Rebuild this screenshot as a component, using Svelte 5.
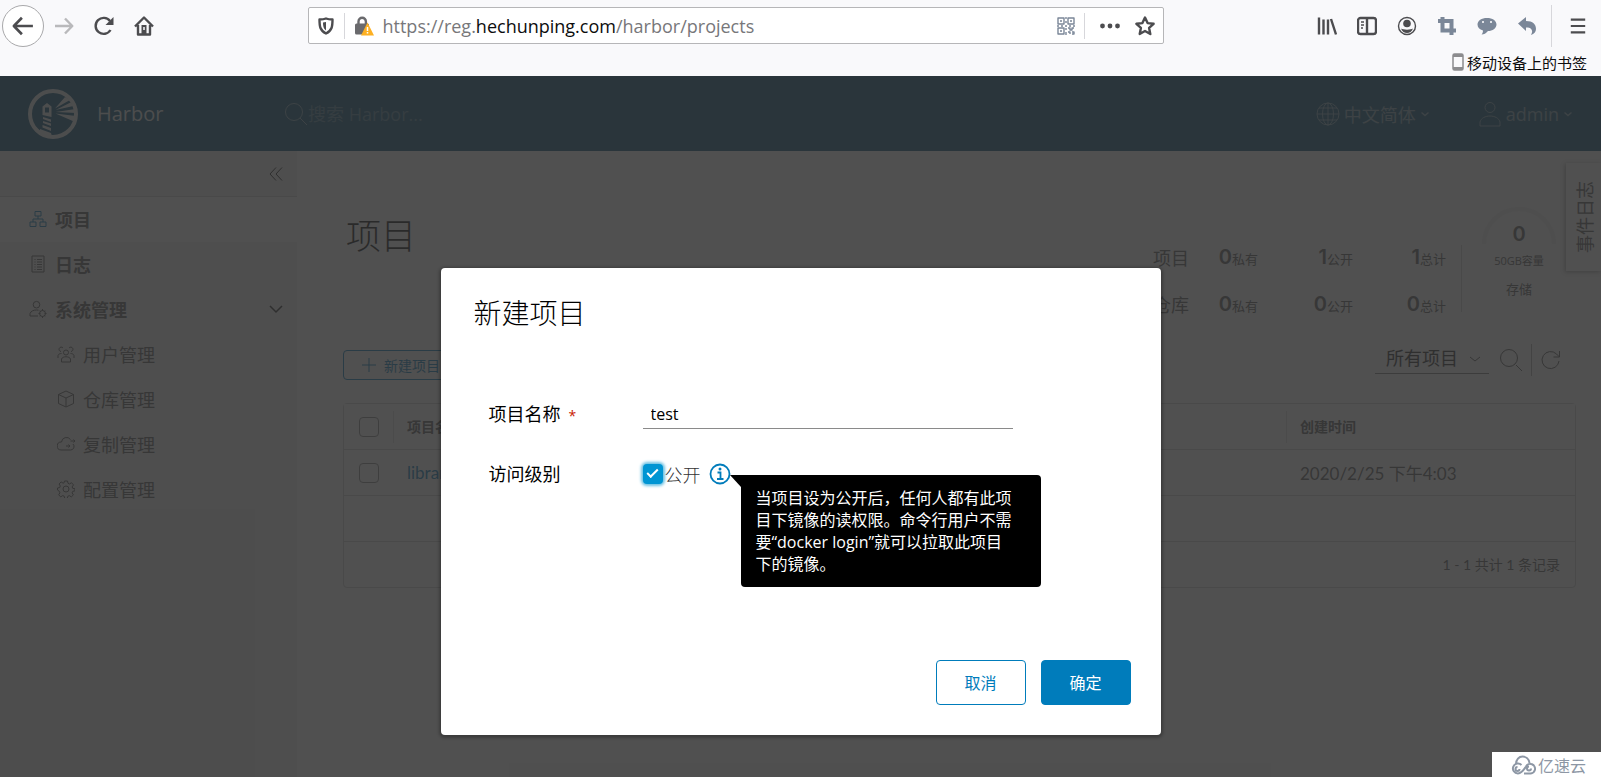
<script>
  let projectName = $state("test")
  let isPublic = $state(true)
  let filter = $state("所有项目")
  let search = $state("")

  const mainNav = [
    { label: "项目", active: true, icon: "M6 1.5h6v4.500H6zM1 12h6v4.500H1zM11 12h6v4.500h-6zM9 6v3M4 12V9h10v3" },
    { label: "日志", icon: "M3 1h12v16H3zM5.500 4.500h1M8 4.500h5M5.500 7h1M8 7h5M5.500 9.500h1M8 9.500h5M5.500 12h1M8 12h5M5.500 14.500h1M8 14.500h5" },
    { label: "系统管理", open: true, icon: "M7.500 8a3.300 3.300 0 1 0 0-6.600 3.300 3.300 0 0 0 0 6.600zM9 16H1v-2.500C2 11 4.500 10 7.500 10l2 .2M13.500 10.500a3 3 0 1 0 0 6 3 3 0 0 0 0-6zM13.500 9v2M13.500 16v2M9.500 13.500h2M15.500 13.500h2M10.700 10.700l1.200 1.200M15 15l1.200 1.200M16.200 10.700L15 11.900M12 15l-1.200 1.200" }
  ]

  const subNav = [
    { label: "用户管理", icon: "M9 10a2.500 2.500 0 1 0 0-5 2.500 2.500 0 0 0 0 5zM4.500 17v-3c1-3 8-3 9 0v3zM4 6.500a2.200 2.200 0 1 1 2-3.500M14 6.500a2.200 2.200 0 1 0-2-3.500M1 13v-2.500c.5-1.500 2-2 3.500-2M17 13v-2.500c-.5-1.500-2-2-3.500-2" },
    { label: "仓库管理", icon: "M9 1l7.500 3.500v9L9 17l-7.500-3.500v-9zM1.500 4.500L9 8l7.500-3.500M9 8v9" },
    { label: "复制管理", icon: "M13.500 4.500A5 5 0 0 0 4.500 7 4 4 0 0 0 4 15h9.500a3.500 3.500 0 0 0 2.500-6M9 11h4M11.500 9.500L13 11l-1.500 1.500M13.500 6H18M16.500 4.500L18 6l-1.500 1.500" },
    { label: "配置管理", icon: "M7.500 1h3l.5 2.300 1.500.7 2-1.300 2 2.200-1.300 2 .5 1.400 2.300.5v2l-2.300.6-.6 1.500 1.300 2-2.100 2-2-1.300-1.500.7-.6 2.200h-2.400l-.6-2.300-1.500-.6-2 1.300-2-2.100 1.200-2-.6-1.500L.5 10V8l2.200-.5.6-1.500-1.200-2 2-2.100 2 1.300 1-.5zM9 6a3 3 0 1 0 0 6 3 3 0 0 0 0-6z" }
  ]

  const stats = [
    { name: "项目", values: [[0, "私有"], [1, "公开"], [1, "总计"]] },
    { name: "仓库", values: [[0, "私有"], [0, "公开"], [0, "总计"]] }
  ]

  const projects = [{ name: "library", created: "2020/2/25 下午4:03" }]
</script>

{#snippet caret()}
  <svg class="caret" viewBox="0 0 10 10" width="10" height="10"><path d="M1.500 3.500L5 6.500l3.500-3" /></svg>
{/snippet}

<div class="window">
  <header class="browser">
    <div class="toolbar">
      <div class="tools">
        <button class="back" aria-label="后退">
          <svg viewBox="0 0 20 20" width="22" height="22"><path d="M19 10H2M9 2.500L1.700 10 9 17.500" /></svg>
        </button>
        <button class="faded" aria-label="前进">
          <svg viewBox="0 0 20 20" width="20" height="20"><path d="M1 10h17M11 2.500l7.300 7.500-7.300 7.500" /></svg>
        </button>
        <button aria-label="刷新">
          <svg viewBox="0 0 20 20" width="20" height="20"><path d="M16.500 14A8 8 0 1 1 16 5" /><path class="fill" d="M19.500 1v8h-8z" /></svg>
        </button>
        <button aria-label="主页">
          <svg viewBox="0 0 20 20" width="20" height="20"><path d="M1 10.500L10 1.500l9 9M4 9v9.500h12V9" /><path class="fill" d="M7.500 9h5v9h-5z" /><path class="knob" d="M10 11v3" /></svg>
        </button>
      </div>

      <div class="urlbar">
        <svg viewBox="0 0 18 18" width="18" height="18"><path d="M9 1.500c2.500 1 4.500 1 6.500 1 0 7-.5 11-6.500 14-6-3-6.500-7-6.500-14 2 0 4 0 6.500-1z" /><path class="fill" d="M9 5v8.500C6.500 12 6 9 6 5.500z" /></svg>
        <span class="line"></span>
        <svg class="lock" viewBox="0 0 20 20" width="20" height="20">
          <path d="M4.500 9V5.500a3.700 3.700 0 0 1 7.400 0V9" />
          <rect class="fill" x="1" y="7.500" width="14" height="11" rx="1.500" />
          <path class="warn" d="M13.500 6.500l6.500 13H7z" /><path class="bang" d="M13.500 11v4M13.500 16v1.500" />
        </svg>
        <p class="url">https://reg.<b>hechunping.com</b>/harbor/projects</p>
        <svg class="slate" viewBox="0 0 18 18" width="18" height="18">
          <path class="thin" d="M1 1h6v6H1zM11 1h6v6h-6zM1 11h6v6H1zM3 4h2M13 4h2M3 14h2M9 0v2M9 4v2M8 9h2M0 9h2M4 9h2M12 9h2M16 9h2M9 11v2M9 15v3M11 11h2v2h2v-2h2M11 15h2v2M15 15h2v2h-2" />
        </svg>
        <span class="line"></span>
        <svg class="dots" viewBox="0 0 20 20" width="20" height="20"><circle cx="2.500" cy="10" r="2.400" /><circle cx="10" cy="10" r="2.400" /><circle cx="17.500" cy="10" r="2.400" /></svg>
        <svg viewBox="0 0 20 20" width="20" height="20"><path d="M10 1.500l2.600 5.600 6 .7-4.500 4.100 1.200 6.100L10 15l-5.300 3 1.200-6.100-4.500-4.100 6-.7z" /></svg>
      </div>

      <div class="addons">
        <svg viewBox="0 0 20 20" width="20" height="20"><path d="M2 1.500v17M6.500 3.500v15M11 3.500v15M14 3l5 15.500" /></svg>
        <svg viewBox="0 0 20 20" width="20" height="20"><rect x="1" y="2" width="18" height="16" rx="2.500" /><path d="M10 2v16" /><path class="thin" d="M4 6h3M4 9h3M4 12h2" /></svg>
        <svg viewBox="0 0 20 20" width="20" height="20"><circle class="thin" cx="10" cy="10" r="8.500" /><circle class="fill" cx="10" cy="7.500" r="3.800" /><path class="fill" d="M4 12.500c2 1.500 10 1.500 12 0-1 3-3.500 4.500-6 4.500s-5-1.500-6-4.500z" /></svg>
        <svg class="slate" viewBox="0 0 20 20" width="20" height="20"><path class="thick" d="M1 5h13.500v14M5.500 1v13.500H19" /></svg>
        <svg class="slate" viewBox="0 0 20 20" width="20" height="20"><path class="fill" d="M10 2c5.500 0 9.500 2.700 9.500 6.500S15.500 15 11 15c-2 2.500-4 3.500-6.500 3.500 1-1 1.500-2.500 1.500-4C2.500 13.500.5 11.500.5 8.500.5 4.700 4.500 2 10 2z" /><path class="eyes" d="M6 5v2M14 5v2" /></svg>
        <svg class="slate" viewBox="0 0 20 20" width="20" height="20"><path class="fill" d="M1 7.500L9 1v4c7 0 10 3.500 10 8 0 3-2 5-5 6 3-5-.5-8-5-7.500V15z" /></svg>
        <span class="line tall"></span>
        <button aria-label="菜单">
          <svg viewBox="0 0 20 20" width="18" height="20"><path d="M2 3h16M2 10h16M2 17h16" /></svg>
        </button>
      </div>
    </div>
    <div class="bookmarks">
      <svg viewBox="0 0 12 18" width="12" height="18"><rect class="phone" x="1" y="1" width="10" height="16" rx="1.500" /><path class="bezel" d="M1 2.500h10M1 15.500h10" /></svg>
      <span>移动设备上的书签</span>
    </div>
  </header>

  <div class="page">
    <div class="top">
      <a class="brand" href="#harbor">
        <svg viewBox="0 0 50 50" width="50" height="50">
          <circle class="ring" cx="25" cy="25" r="23" />
          <path class="beam" d="M27 19.500L37 8l5 3zM27.500 21l15-7.500 3 3.500zM27.500 23l20-3 .5 4zM27.500 24.500L48 27l-1 6z" />
          <path class="beam" d="M14.500 17.500l4.500-3.500 4.500 3.500V28l-9-2zM15 28l8 2.500v2.500l-8-3zM15 32l8 2.500v2.500l-8-3zM14.500 36l8.500 3v3l-8.500-3.500zM12 40l11 4 1 4-12-3.500z" />
          <rect class="hole" x="17" y="18.500" width="4" height="5" />
        </svg>
        <span>Harbor</span>
      </a>
      <label class="search">
        <svg viewBox="0 0 24 24" width="24" height="24"><circle cx="10" cy="10" r="8.500" /><path d="M16 16l7 7" /></svg>
        <input bind:value={search} placeholder="搜索 Harbor..." aria-label="搜索 Harbor" />
      </label>
      <button class="menu">
        <svg viewBox="0 0 24 24" width="24" height="24"><circle cx="12" cy="12" r="11" /><ellipse cx="12" cy="12" rx="5.500" ry="11" /><path d="M12 1v22M1 12h22M3 6h18M3 18h18" /></svg>
        <span>中文简体</span>
        {@render caret()}
      </button>
      <button class="menu">
        <svg viewBox="0 0 24 26" width="24" height="26"><circle cx="12" cy="6.500" r="5" /><path d="M2 25v-4c2-8 18-8 20 0v4z" /></svg>
        <span>admin</span>
        {@render caret()}
      </button>
    </div>

    <div class="layout">
      <nav>
        <div class="fold">
          <button aria-label="收起">
            <svg viewBox="0 0 16 16" width="16" height="16"><path d="M8 1.500L2 8l6 6.500M14 1.500L8 8l6 6.500" /></svg>
          </button>
        </div>
        {#each mainNav as item}
          <a href="#{item.label}" class="item" class:active={item.active}>
            <svg viewBox="0 0 18 18" width="18" height="18"><path d={item.icon} /></svg>
            <span>{item.label}</span>
            {#if item.open}
              <svg class="toggle" viewBox="0 0 14 14" width="14" height="14"><path d="M1 4l6 6 6-6" /></svg>
            {/if}
          </a>
        {/each}
        {#each subNav as item}
          <a href="#{item.label}" class="item sub">
            <svg viewBox="0 0 18 18" width="18" height="18"><path d={item.icon} /></svg>
            <span>{item.label}</span>
          </a>
        {/each}
      </nav>

      <main>
        <section class="summary">
          <h1>项目</h1>
          <div class="stats">
            {#each stats as row}
              <span class="name">{row.name}</span>
              {#each row.values as [count, unit]}
                <span class="stat"><b>{count}</b>{unit}</span>
              {/each}
            {/each}
          </div>
          <div class="rule"></div>
          <div class="gauge">
            <svg viewBox="0 0 74 37" width="74" height="37"><path d="M2 37a35 35 0 0 1 70 0" /></svg>
            <b>0</b>
            <small>50GB容量</small>
            <span>存储</span>
          </div>
        </section>

        <section class="actions">
          <button class="create">
            <svg viewBox="0 0 14 14" width="14" height="14"><path d="M7 0v14M0 7h14" /></svg>
            新建项目
          </button>
          <div class="pick">
            <select bind:value={filter} aria-label="项目类型">
              <option>所有项目</option>
            </select>
            <svg viewBox="0 0 10 10" width="10" height="10"><path d="M0 3l5 4 5-4" /></svg>
          </div>
          <button class="plain" aria-label="搜索">
            <svg viewBox="0 0 24 24" width="24" height="24"><circle cx="10" cy="10" r="8.500" /><path d="M17 17l6 6" /></svg>
          </button>
          <span class="split"></span>
          <button class="plain" aria-label="刷新列表">
            <svg viewBox="0 0 20 20" width="20" height="20"><path d="M18 11a8.500 8.500 0 1 1-2.500-7l3 3M18.500 1v6h-6" /></svg>
          </button>
        </section>

        <div class="grid">
          <table>
            <thead>
              <tr>
                <th class="check"><input type="checkbox" aria-label="全选" /></th>
                <th><span>项目名称</span></th>
                <th class="date"><span>创建时间</span></th>
              </tr>
            </thead>
            <tbody>
              {#each projects as project}
                <tr>
                  <td class="check"><input type="checkbox" aria-label={project.name} /></td>
                  <td><a href="#{project.name}">{project.name}</a></td>
                  <td class="date">{project.created}</td>
                </tr>
              {/each}
              <tr class="blank"><td colspan="3"></td></tr>
            </tbody>
          </table>
          <p>1 - 1 共计 1 条记录</p>
        </div>
      </main>
    </div>

    <button class="events">事件日志</button>

    <div class="backdrop">
      <div class="modal" role="dialog" aria-labelledby="dialog-title">
        <h2 id="dialog-title">新建项目</h2>
        <form>
          <div class="field">
            <label for="name">项目名称<i>*</i></label>
            <input id="name" type="text" bind:value={projectName} />
          </div>
          <div class="field">
            <span class="caption">访问级别</span>
            <input id="public" type="checkbox" bind:checked={isPublic} />
            <label class="light" for="public">公开</label>
            <div class="info">
              <svg viewBox="0 0 22 22" width="22" height="22"><circle cx="11" cy="11" r="9.500" /><path d="M8.500 9.500h3v6.500M8 16h6.500" /><circle class="dot" cx="11" cy="6" r="1.500" /></svg>
              <div class="tip" role="tooltip">当项目设为公开后，任何人都有此项目下镜像的读权限。命令行用户不需要“docker login”就可以拉取此项目下的镜像。</div>
            </div>
          </div>
        </form>
        <footer>
          <button>取消</button>
          <button class="primary">确定</button>
        </footer>
      </div>
    </div>

    <div class="mark">
      <svg viewBox="0 0 26 20" width="26" height="20"><path d="M6 9C6 4.500 9 1.500 12.500 1.500S19 4 19.500 8M8 18.500a5 5 0 1 1 3.500-8.500M8 18.500c4 0 6-4 8-7a4.800 4.800 0 1 1 3.500 7H14M9.500 14a2 2 0 1 1-2-2M21 13.500a2 2 0 1 1-2-2" /></svg>
      <span>亿速云</span>
    </div>
  </div>
</div>

<style>
  :global(body) {
    margin: 0;
  }

  .window {
    display: flex;
    flex-direction: column;
    min-height: 100vh;
    font-family: "Open Sans", "Noto Sans CJK SC", sans-serif;
    font-size: 18px;
    color: #565656;
  }
  .window * {
    box-sizing: border-box;
  }
  button, input, select {
    font: inherit;
    color: inherit;
    background: none;
    border: 0;
    margin: 0;
    padding: 0;
  }
  a {
    color: inherit;
    text-decoration: none;
  }
  svg {
    display: block;
    flex: none;
    fill: none;
    stroke: currentColor;
  }

  /* browser bars */
  .browser {
    background: #f9f9fb;
    color: #4c4c4f;
    height: 76px;
  }
  .browser svg {
    stroke-width: 2.4;
    stroke-linejoin: round;
  }
  .browser .fill, .dots circle {
    fill: currentColor;
    stroke: none;
  }
  .browser .thin {
    stroke-width: 1.4;
  }
  .browser .thick {
    stroke-width: 4;
    stroke-linejoin: miter;
  }
  .toolbar {
    display: flex;
    justify-content: space-between;
    align-items: center;
    height: 51px;
    padding: 0 14px 0 2px;
  }
  .tools {
    display: flex;
    align-items: center;
    gap: 20px;
  }
  .tools .back {
    display: grid;
    place-items: center;
    width: 42px;
    height: 42px;
    border: 1px solid #a9a9ab;
    border-radius: 50%;
    background: #fff;
    margin-right: -10px;
  }
  .faded {
    color: #b9b9bb;
  }
  .knob {
    stroke: #f9f9fb;
    stroke-width: 1.5;
  }
  .urlbar {
    display: flex;
    align-items: center;
    flex: 0 1 856px;
    gap: 9px;
    height: 37px;
    padding: 0 8px;
    border: 1px solid #b6b6b8;
    border-radius: 2px;
    background: #fff;
  }
  .lock {
    color: #6a6a6d;
  }
  .dots {
    margin: 0 6px;
  }
  .line {
    width: 1px;
    height: 26px;
    background: #d7d7db;
  }
  .line.tall {
    height: 42px;
    margin: 0 -3px 0 -6px;
  }
  .browser .warn {
    fill: #fdb022;
    stroke: none;
  }
  .browser .bang {
    stroke: #fff;
    stroke-width: 1.5;
  }
  .url {
    flex: 1;
    margin: 0;
    font-family: "Open Sans", sans-serif;
    color: #77777a;
    white-space: nowrap;
  }
  .url b {
    font-weight: 400;
    color: #0c0c0d;
  }
  .addons {
    display: flex;
    align-items: center;
    gap: 20px;
  }
  .browser .slate {
    color: #7b8798;
  }
  .browser .eyes {
    stroke: #f9f9fb;
    stroke-width: 1.6;
  }
  .bookmarks {
    display: flex;
    justify-content: flex-end;
    align-items: center;
    gap: 3px;
    height: 22px;
    padding-right: 14px;
    font-size: 15px;
    color: #0c0c0d;
  }
  .browser .phone {
    stroke: #8c8c8e;
    stroke-width: 1.5;
  }
  .browser .bezel {
    stroke: #8c8c8e;
    stroke-width: 3;
  }

  /* harbor */
  .page {
    position: relative;
    display: flex;
    flex-direction: column;
    flex: 1;
  }
  .top {
    display: flex;
    align-items: center;
    height: 75px;
    padding: 0 28px;
    background: #004a70;
    color: #fafafa;
  }
  .brand {
    display: flex;
    align-items: center;
    gap: 19px;
    width: 256px;
    font-size: 20px;
    opacity: 0.9;
  }
  .ring {
    stroke-width: 4;
  }
  .beam {
    fill: currentColor;
    stroke: none;
  }
  .hole {
    fill: #004a70;
    stroke: none;
  }
  .search {
    display: flex;
    align-items: center;
    flex: 1;
    opacity: 0.5;
  }
  .search input {
    flex: 1;
    outline: 0;
  }
  .search input::placeholder {
    color: inherit;
    opacity: 0.6;
  }
  .menu {
    display: flex;
    align-items: center;
    gap: 4px;
    margin-left: 48px;
    opacity: 0.5;
  }
  .caret {
    stroke-width: 1.5;
  }

  .layout {
    display: flex;
    flex: 1;
    background: #fafafa;
  }
  nav {
    width: 297px;
    flex: none;
    background: #eee;
  }
  .fold {
    display: flex;
    justify-content: flex-end;
    align-items: center;
    height: 46px;
    padding-right: 13px;
    border-bottom: 1px solid #ccc;
    color: #222;
  }
  .item {
    display: flex;
    align-items: center;
    gap: 8px;
    height: 45px;
    padding: 0 14px 2px 29px;
    font-weight: 700;
  }
  .item.active {
    background: #fff;
  }
  .item.active svg {
    color: #0079b8;
  }
  .item.sub {
    padding-left: 57px;
    font-weight: 400;
  }
  .toggle {
    margin-left: auto;
    stroke-width: 1.5;
    color: #222;
  }

  main {
    flex: 1;
    min-width: 0;
    padding: 0 25px 0 46px;
  }
  .summary {
    display: flex;
    align-items: flex-start;
  }
  h1 {
    flex: 1;
    margin: 65px 0 0 3px;
    font-size: 35px;
    font-weight: 300;
    line-height: 40px;
    color: #000;
  }
  .stats {
    display: grid;
    grid-template-columns: 40px 65px 95px 93px;
    grid-auto-rows: 47px;
    align-items: center;
    margin-top: 82px;
  }
  .stat {
    text-align: right;
    font-size: 13px;
  }
  .stat b, .gauge b {
    font-family: Inter, sans-serif;
    font-size: 20px;
    font-weight: 600;
  }
  .rule {
    width: 1px;
    height: 67px;
    margin: 94px 20px 0 15px;
    background: #ccc;
  }
  .gauge {
    display: flex;
    flex-direction: column;
    align-items: center;
    margin: 56px 20px 0 0;
  }
  .gauge svg {
    stroke: #eee;
    stroke-width: 4;
  }
  .gauge b {
    line-height: 24px;
    margin-top: -22px;
  }
  .gauge small {
    font-size: 11px;
    line-height: 30px;
  }
  .gauge span {
    font-size: 13px;
    line-height: 26px;
  }

  .actions {
    display: flex;
    align-items: flex-start;
    margin: 17px 0 23px;
    padding-right: 15px;
  }
  .create {
    display: flex;
    align-items: center;
    gap: 8px;
    height: 30px;
    margin: 6px auto 0 0;
    padding: 0 18px;
    border: 1px solid #0079b8;
    border-radius: 4px;
    font-size: 14px;
    color: #0079b8;
  }
  .pick {
    position: relative;
    margin-right: 10px;
  }
  .pick select {
    display: block;
    appearance: none;
    width: 114px;
    height: 30px;
    padding: 0 0 2px 11px;
    border-bottom: 1px solid #777;
    color: #222;
  }
  .pick svg {
    position: absolute;
    right: 9px;
    top: 10px;
  }
  .plain {
    height: 32px;
  }
  .split {
    width: 1px;
    height: 32px;
    margin: 0 9px 0 8px;
    background: #aaa;
  }

  .grid {
    border: 1px solid #ccc;
    border-radius: 4px;
    background: #fff;
  }
  table {
    width: 100%;
    border-spacing: 0;
    table-layout: fixed;
  }
  th, td {
    height: 46px;
    padding: 0 0 0 13px;
    border-bottom: 1px solid #ccc;
    text-align: left;
  }
  td {
    font-family: Lato, "Noto Sans CJK SC", sans-serif;
    font-size: 17px;
  }
  th {
    font-size: 14px;
    background: #fafafa;
  }
  th span {
    display: flex;
    align-items: center;
    height: 32px;
    margin-left: -14px;
    padding: 0 0 2px 13px;
    border-left: 1px solid #ddd;
  }
  td a {
    color: #0079b8;
  }
  .check {
    width: 50px;
    padding-left: 15px;
  }
  .date {
    width: 290px;
    padding-left: 15px;
  }
  .check input {
    display: block;
    appearance: none;
    width: 20px;
    height: 20px;
    border: 1px solid #888;
    border-radius: 4px;
  }
  .blank td {
    background: #fafafa;
  }
  .grid p {
    margin: 0;
    padding-right: 15px;
    font-family: Lato, "Noto Sans CJK SC", sans-serif;
    font-size: 14px;
    line-height: 45px;
    text-align: right;
  }

  .events {
    position: absolute;
    top: 87px;
    right: 0;
    width: 35px;
    height: 108px;
    writing-mode: vertical-rl;
    text-orientation: sideways;
    transform: rotate(180deg);
    background: #fafafa;
    box-shadow: 1px -1px 4px #999;
  }

  .backdrop {
    position: absolute;
    inset: 0;
    display: flex;
    justify-content: center;
    align-items: flex-start;
    padding-top: 192px;
    background: rgba(49, 49, 49, 0.85);
  }
  .modal {
    width: 720px;
    padding: 30px;
    border-radius: 4px;
    background: #fff;
    color: #000;
    box-shadow: 0 1px 3px 2px rgba(0, 0, 0, 0.25);
  }
  h2 {
    margin: 0 0 56px 3px;
    font-size: 28px;
    font-weight: 300;
    line-height: 30px;
  }
  .field {
    display: flex;
    align-items: center;
    height: 60px;
    padding-left: 18px;
  }
  .field label:first-child, .caption {
    width: 154px;
    padding-bottom: 2px;
  }
  .field i {
    margin-left: 8px;
    font-size: 14px;
    font-style: normal;
    color: #c92100;
  }
  .field .light {
    margin: 0 8px 0 2px;
    font-weight: 300;
    color: #333;
  }
  #name {
    width: 370px;
    height: 30px;
    padding: 0 8px;
    border-bottom: 1px solid #8a8a8a;
    font-size: 16px;
    outline: 0;
  }
  #public {
    appearance: none;
    display: grid;
    place-items: center;
    width: 20px;
    height: 20px;
    border: 1px solid #888;
    border-radius: 4px;
    box-shadow: 0 0 3px 2px #6bc1e3;
  }
  #public:checked {
    border: 0;
    background: #0095d3;
  }
  #public:checked::after {
    content: "";
    width: 9px;
    height: 4px;
    margin-bottom: 4px;
    border: solid #fff;
    border-width: 0 0 2px 2px;
    transform: rotate(-45deg);
  }
  .info {
    position: relative;
    color: #007cbb;
  }
  .info svg {
    stroke-width: 1.8;
  }
  .info .dot {
    fill: currentColor;
    stroke: none;
  }
  .tip {
    position: absolute;
    top: 12px;
    left: 32px;
    width: 300px;
    padding: 12px 25px 12px 15px;
    border-radius: 0 4px 4px 4px;
    background: #000;
    color: #fff;
    font-size: 16px;
    line-height: 22px;
  }
  .tip::before {
    content: "";
    position: absolute;
    top: 0;
    left: -11px;
    border-top: 12px solid #000;
    border-left: 11px solid transparent;
  }
  footer {
    display: flex;
    justify-content: flex-end;
    gap: 15px;
    margin-top: 156px;
  }
  footer button {
    width: 90px;
    height: 45px;
    padding-bottom: 2px;
    border: 1px solid #007cbb;
    border-radius: 4px;
    font-size: 16px;
    color: #007cbb;
  }
  footer .primary {
    background: #007cbb;
    color: #fff;
  }

  .mark {
    position: absolute;
    right: 0;
    bottom: 0;
    display: flex;
    align-items: center;
    gap: 2px;
    width: 109px;
    height: 25px;
    padding-left: 18px;
    background: #fff;
    color: #8d97a5;
    font-size: 16px;
  }
  .mark svg {
    stroke-width: 2;
  }
</style>
